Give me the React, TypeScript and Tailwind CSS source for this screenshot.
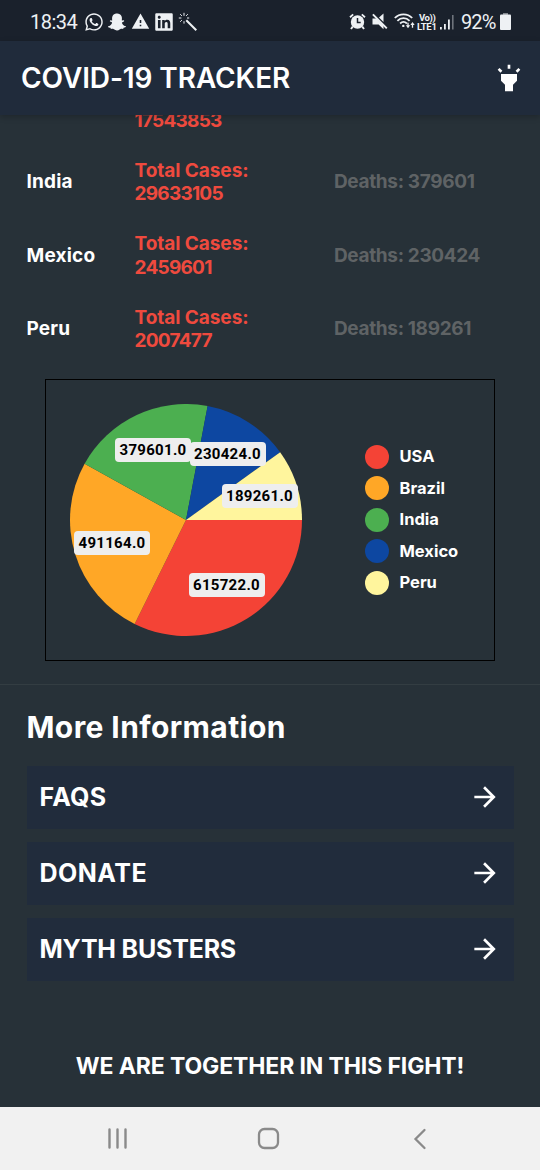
import React from "react";
import { FaWhatsapp, FaSnapchatGhost, FaLinkedin } from "react-icons/fa";
import { MdArrowForward, MdHighlight, MdWarning } from "react-icons/md";

type Country = {
  name: string;
  cases: string;
  deaths: number;
};

const countries: Country[] = [
  { name: "Brazil", cases: "17543853", deaths: 491164 },
  { name: "India", cases: "29633105", deaths: 379601 },
  { name: "Mexico", cases: "2459601", deaths: 230424 },
  { name: "Peru", cases: "2007477", deaths: 189261 },
];

const slices = [
  { name: "USA", value: 615722, color: "#f44336", dot: "bg-[#f44336]", label: "left-[118.5px] top-[169.5px]" },
  { name: "Brazil", value: 491164, color: "#ffa726", dot: "bg-[#ffa726]", label: "left-[4px] top-[127px]" },
  { name: "India", value: 379601, color: "#4caf50", dot: "bg-[#4caf50]", label: "left-[45px] top-[34px]" },
  { name: "Mexico", value: 230424, color: "#0d47a1", dot: "bg-[#0d47a1]", label: "left-[119.5px] top-[38.5px]" },
  { name: "Peru", value: 189261, color: "#fff59d", dot: "bg-[#fff59d]", label: "left-[151.5px] top-[80.5px]" },
];

const links = [
  { title: "FAQS", track: "tracking-[0.3px]" },
  { title: "DONATE", track: "tracking-[0.5px]" },
  { title: "MYTH BUSTERS", track: "tracking-[-0.2px]" },
];

function WandIcon() {
  return (
    <svg width="20" height="20" viewBox="0 0 20 20" fill="none" stroke="#eef1f4">
      <path d="M8.3 8.3 18.3 18.3" strokeWidth="2" />
      <path d="M6 .8v3M6 9.2v2.4M.8 6h2.6M9 6h2.2M2.2 2.2l1.7 1.7M9.8 2.2 8.1 3.9M2.2 9.8l1.7-1.7" strokeWidth="1" />
    </svg>
  );
}

function AlarmIcon() {
  return (
    <svg width="17" height="17" viewBox="0 0 17 17" fill="none">
      <circle cx="8.5" cy="9" r="6.7" fill="#eef1f4" />
      <path d="M1 4.2 4.2 1.4M16 4.2 12.8 1.4" stroke="#eef1f4" strokeWidth="1.8" />
      <path d="M3.8 13.5 2 16M13.2 13.5 15 16" stroke="#eef1f4" strokeWidth="2" />
      <path d="M8.5 5v4.4h3.2" stroke="#1a212c" strokeWidth="1.5" />
    </svg>
  );
}

function MutedIcon() {
  return (
    <svg width="16" height="17" viewBox="0 0 16 17" fill="#eef1f4">
      <path d="M.5 5.6h3.8l7.2 7.2v3.4L6.6 11.4H.5z" />
      <path d="M7 4.6 11.5.6v8.5z" />
      <path d="M.9 1.3 14.8 15.4" stroke="#eef1f4" strokeWidth="1.9" />
    </svg>
  );
}

function WifiIcon() {
  return (
    <svg width="21" height="17" viewBox="0 0 21 17" fill="none" stroke="#eef1f4" strokeWidth="1.8">
      <path d="M.8 5C5.5.1 13.5.1 18.2 5" />
      <path d="M3.4 7.8c3.5-3.5 8.7-3.5 12.2 0" />
      <path d="M6.1 10.5c2-1.9 4.8-1.9 6.8 0" />
      <circle cx="9.3" cy="12.9" r="1.2" fill="#eef1f4" stroke="none" />
      <path d="M14 9.8v3.4M18.5 14.8v-3.5" strokeWidth="1.3" />
      <path d="M11.8 12.3h4.4L14 15.3zM16.4 12h4.3l-2.2-3z" fill="#eef1f4" stroke="none" />
    </svg>
  );
}

function SignalIcon() {
  return (
    <svg width="14" height="16" viewBox="0 0 14 16" fill="#eef1f4">
      <path d="M0 13h1.8v2.5H0zM4 10h1.8v5.5H4zM8 5.5h1.8v10H8z" />
      <path d="M12 1h1.6v14.5H12z" opacity=".4" />
    </svg>
  );
}

function StatusBar() {
  return (
    <div className="flex h-[41px] shrink-0 items-center bg-[#1a212c] pt-[2px] font-['Roboto',sans-serif] text-[#eef1f4]">
      <span className="ml-[30px] w-[54px] text-[20px] leading-6 tracking-[-0.5px]">18:34</span>
      <FaWhatsapp size={20} />
      <FaSnapchatGhost size={18} className="ml-[4px]" />
      <MdWarning size={19} className="ml-[5px]" />
      <span className="ml-[4px] flex">
        <FaLinkedin size={20} />
      </span>
      <span className="ml-[4px] flex">
        <WandIcon />
      </span>
      <span className="ml-auto flex">
        <AlarmIcon />
      </span>
      <span className="ml-[6px] flex">
        <MutedIcon />
      </span>
      <span className="ml-[6px] flex">
        <WifiIcon />
      </span>
      <span className="ml-[2px] flex w-[21px] flex-col whitespace-nowrap text-[9.5px] font-bold leading-[9px]">
        <span className="pl-[2px] tracking-[-0.4px]">Vo))</span>
        <span className="tracking-[-0.3px]">LTE1</span>
      </span>
      <span className="ml-[2px] flex">
        <SignalIcon />
      </span>
      <span className="ml-[7px] w-[39px] text-[20px] leading-6 tracking-[-0.9px]">92%</span>
      <svg className="mr-[29px]" width="11" height="17" viewBox="0 0 11 17" fill="#eef1f4">
        <path d="M3 0h5v2H3z" opacity=".5" />
        <rect y="1.6" width="11" height="15.4" rx="1" />
      </svg>
    </div>
  );
}

function CountryRow({ name, cases, deaths }: Country) {
  return (
    <div className="flex h-[73.5px] shrink-0 items-center text-[19px] font-bold leading-[23.5px]">
      <span className="w-[134.5px] pl-[26.5px] tracking-[0.2px] text-white">{name}</span>
      <span className="w-[199.5px] text-[#ef4a3e]">
        <span className="tracking-[-0.05px]">Total Cases:</span>
        <br />
        <span className="tracking-[-0.75px]">{cases}</span>
      </span>
      <span className="tracking-[-0.35px] text-[#5f6365]">Deaths: {deaths}</span>
    </div>
  );
}

function Pie() {
  const total = slices.reduce((sum, s) => sum + s.value, 0);
  let angle = 0;
  const point = (a: number) => `${116 + 116 * Math.cos(a)} ${116 + 116 * Math.sin(a)}`;
  return (
    <div className="relative h-[232px] w-[232px]">
      <svg width="232" height="232" viewBox="0 0 232 232">
        {slices.map((s) => {
          const start = angle;
          angle += (s.value / total) * Math.PI * 2;
          return <path key={s.name} fill={s.color} d={`M116 116L${point(start)}A116 116 0 0 1 ${point(angle)}Z`} />;
        })}
      </svg>
      {slices.map((s) => (
        <span
          key={s.name}
          className={`absolute flex h-6 w-[76px] items-center justify-center rounded-[4px] bg-[#eeeeee] pt-px font-['Roboto',sans-serif] text-[15px] font-bold tracking-[0.3px] text-black ${s.label}`}
        >
          {s.value.toFixed(1)}
        </span>
      ))}
    </div>
  );
}

export default function App() {
  return (
    <div className="flex h-[1170px] w-[540px] flex-col overflow-hidden bg-[#273138] font-['Inter',sans-serif]">
      <StatusBar />
      <header className="z-10 flex h-[74px] shrink-0 items-center justify-between bg-[#202b3b] pl-[21px] pr-[15.5px] shadow-[0_2px_6px_rgba(0,0,0,0.22)]">
        <h1 className="text-[28px] font-semibold leading-8 tracking-[-0.1px] text-white">COVID-19 TRACKER</h1>
        <MdHighlight size={32} color="white" />
      </header>
      <main className="flex min-h-0 flex-1 flex-col overflow-hidden">
        <div className="-mt-[43.2px] flex flex-col">
          {countries.map((c) => (
            <CountryRow key={c.name} {...c} />
          ))}
        </div>
        <section className="ml-[45px] mt-[12.7px] flex h-[282px] w-[450px] shrink-0 items-center border-[1.5px] border-black pl-6">
          <Pie />
          <ul className="ml-[63px] flex flex-col gap-[7.5px]">
            {slices.map((s) => (
              <li key={s.name} className="flex h-6 items-center gap-[10.5px] text-[16.5px] font-bold text-white">
                <span className={`h-6 w-6 rounded-full ${s.dot}`} />
                <span>{s.name}</span>
              </li>
            ))}
          </ul>
        </section>
        <div className="mt-[23px] h-px shrink-0 bg-[#333d42]" />
        <h2 className="ml-[26.5px] mt-[22px] text-[30px] font-bold leading-10 tracking-[0.4px] text-white">More Information</h2>
        <nav className="mx-[26.5px] mt-[19px] flex flex-col gap-[13px]">
          {links.map((l) => (
            <a key={l.title} className="flex h-[63px] items-center justify-between bg-[#212c3c] pl-[13px] pr-[13px] text-white">
              <span className={`pt-px text-[25px] font-bold ${l.track}`}>{l.title}</span>
              <MdArrowForward size={32} />
            </a>
          ))}
        </nav>
        <p className="mt-[69px] text-center text-[23px] font-bold leading-8 tracking-[-0.12px] text-white">
          WE ARE TOGETHER IN THIS FIGHT!
        </p>
      </main>
      <footer className="flex h-[63px] shrink-0 items-center bg-[#f1f1f1] text-[#8a8a8a]">
        <svg className="ml-[107px]" width="21" height="21" viewBox="0 0 21 21" fill="none" stroke="currentColor" strokeWidth="2.4" strokeLinecap="round">
          <path d="M2.5 1.5v18M10.5 1.5v18M18.5 1.5v18" />
        </svg>
        <svg className="ml-[129px]" width="23" height="23" viewBox="0 0 23 23" fill="none" stroke="currentColor" strokeWidth="2.3">
          <rect x="2" y="2" width="19" height="19" rx="5.5" />
        </svg>
        <svg className="ml-[133px]" width="14" height="22" viewBox="0 0 14 22" fill="none" stroke="currentColor" strokeWidth="2.3" strokeLinecap="round">
          <path d="M11.5 2 2.5 11l9 9" />
        </svg>
      </footer>
    </div>
  );
}
